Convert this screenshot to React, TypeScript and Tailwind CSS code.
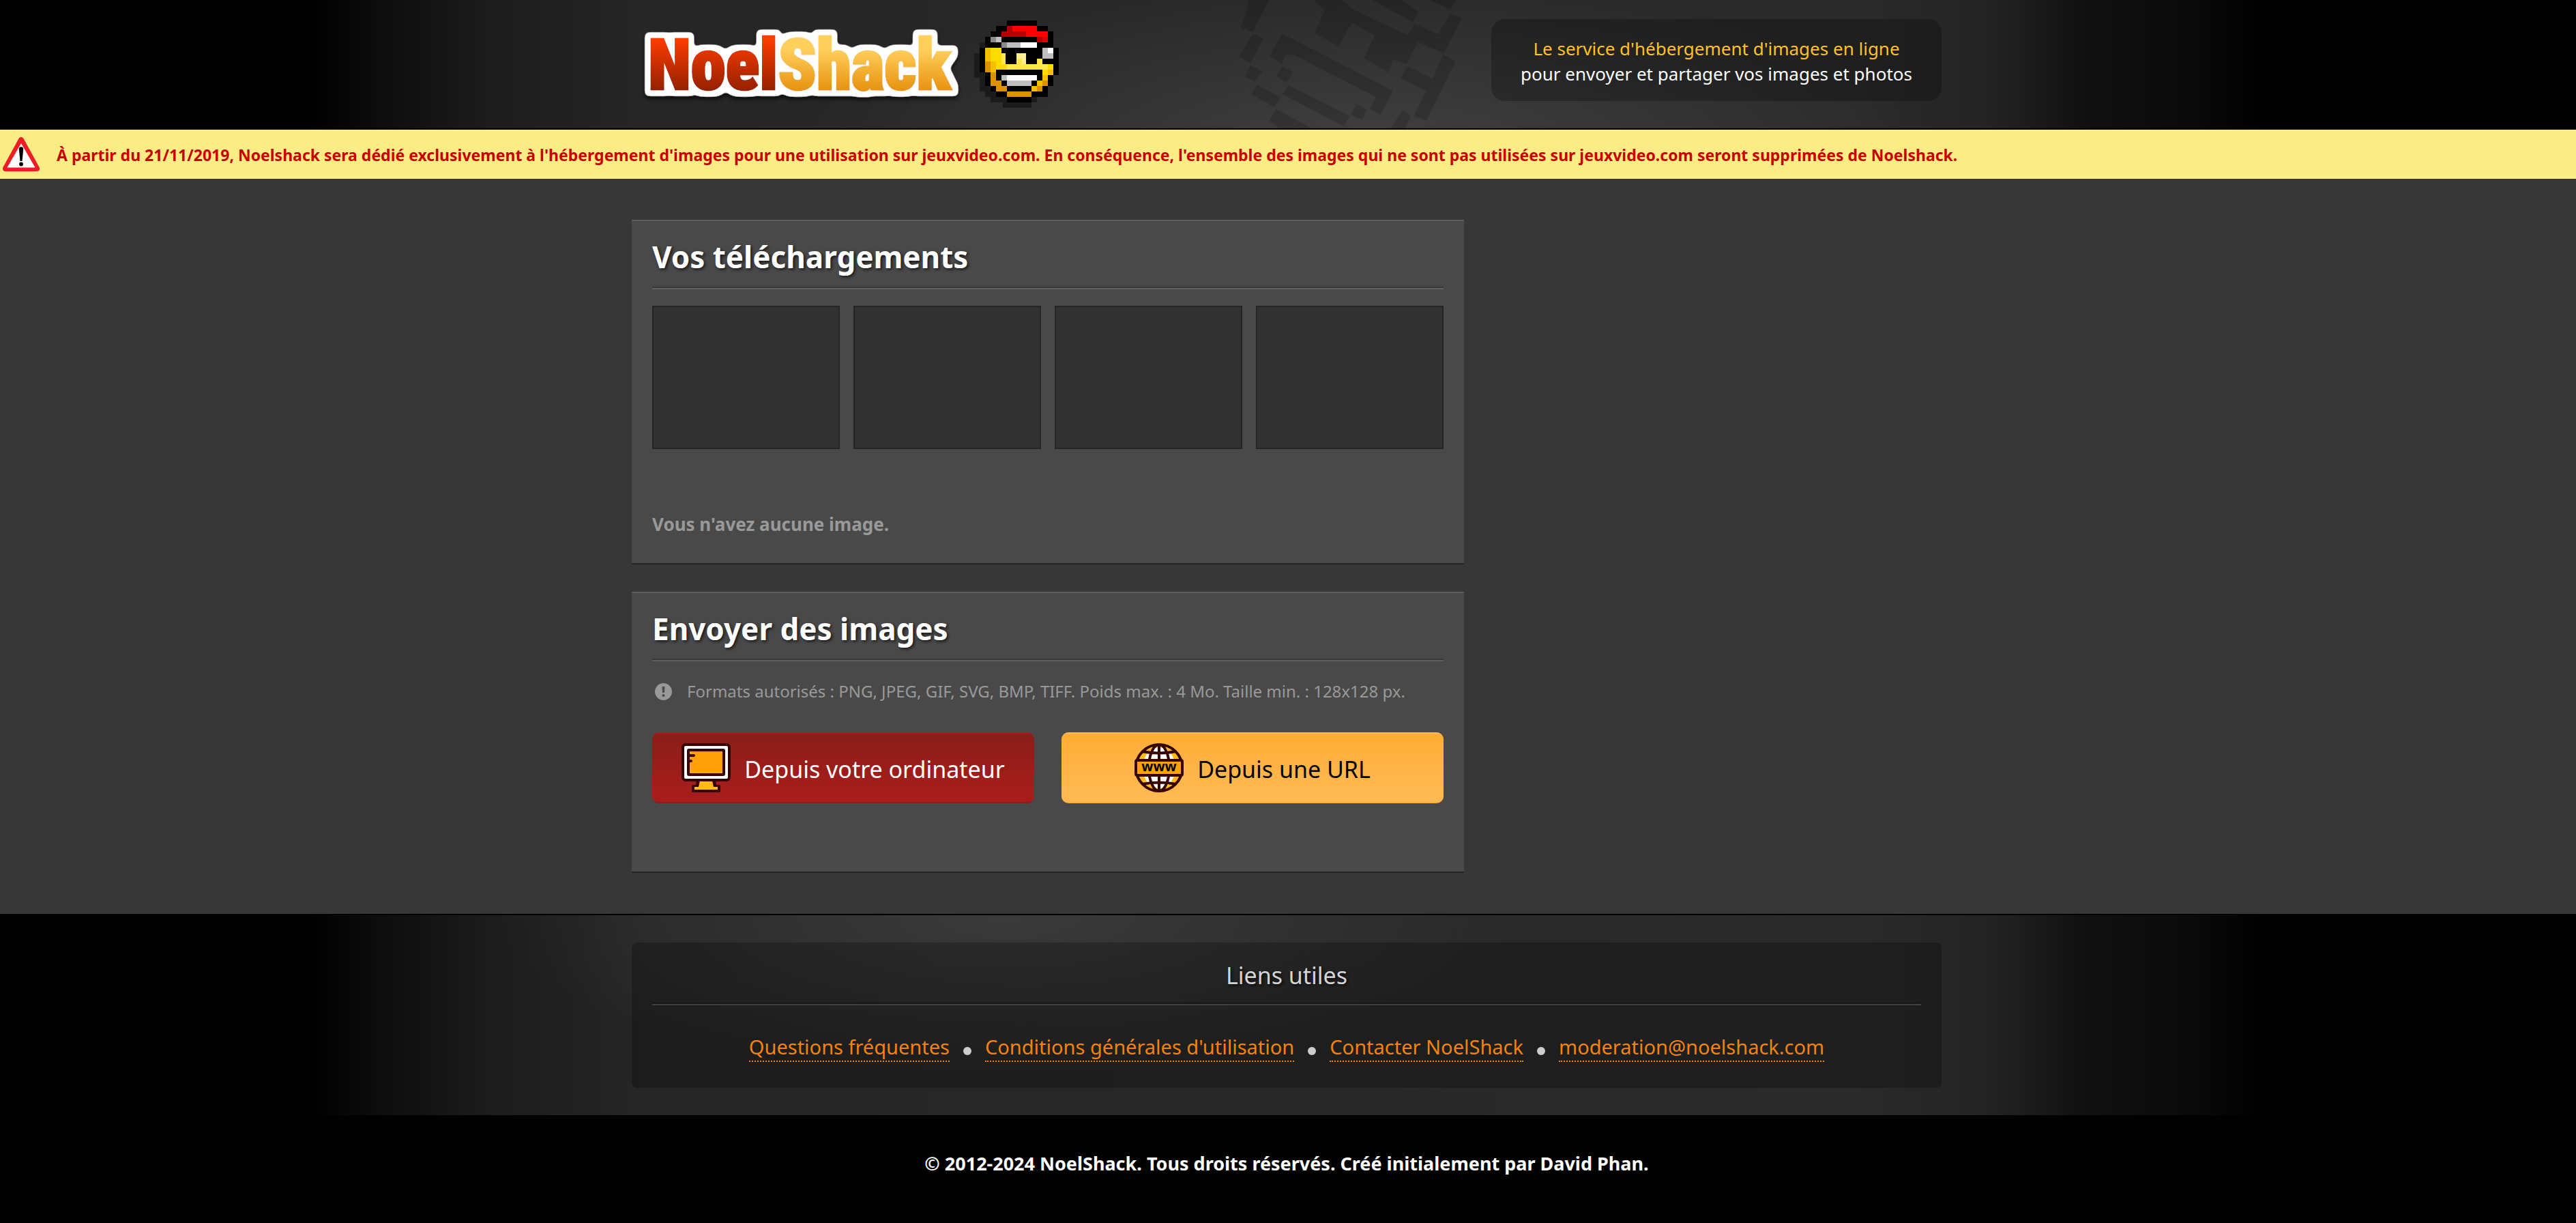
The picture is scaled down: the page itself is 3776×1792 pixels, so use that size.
import type { ReactNode } from "react";

type Cell = [x: number, y: number, right: number, bottom: number, fill: string];

const SMILEY: Cell[] = [
  [36, 108, 84, 312, "#1b1b1b"],
  [12, 156, 60, 264, "#1b1b1b"],
  [36, 300, 108, 324, "#1b1b1b"],
  [60, 312, 108, 348, "#1b1b1b"],
  [84, 336, 288, 372, "#1b1b1b"],
  [138, 360, 264, 396, "#1b1b1b"],
  [156, 12, 288, 36, "#000"],
  [108, 36, 336, 60, "#000"],
  [84, 60, 360, 84, "#000"],
  [60, 84, 360, 132, "#000"],
  [36, 132, 384, 240, "#000"],
  [60, 240, 384, 252, "#000"],
  [60, 252, 360, 300, "#000"],
  [84, 300, 336, 324, "#000"],
  [108, 324, 336, 348, "#000"],
  [156, 348, 264, 372, "#000"],
  [156, 36, 180, 60, "#b00000"],
  [180, 36, 288, 60, "#ff0000"],
  [132, 60, 240, 84, "#b00000"],
  [240, 60, 336, 84, "#ff0000"],
  [288, 84, 312, 108, "#b00000"],
  [312, 84, 336, 108, "#dc0000"],
  [84, 84, 108, 108, "#8a8a8a"],
  [108, 84, 132, 108, "#bfbfbf"],
  [132, 108, 156, 132, "#8a8a8a"],
  [156, 108, 216, 132, "#bfbfbf"],
  [216, 108, 288, 132, "#fff"],
  [312, 132, 360, 180, "#bfbfbf"],
  [336, 132, 360, 156, "#fff"],
  [60, 132, 84, 192, "#f5bf00"],
  [84, 132, 132, 228, "#fcdc00"],
  [60, 192, 84, 240, "#dd9000"],
  [84, 192, 108, 240, "#f5bf00"],
  [132, 156, 150, 204, "#fde650"],
  [108, 204, 156, 228, "#fcdc00"],
  [156, 204, 336, 228, "#fde650"],
  [336, 204, 360, 228, "#fcdc00"],
  [198, 156, 240, 204, "#feec90"],
  [198, 180, 222, 204, "#fde650"],
  [288, 180, 312, 204, "#fde650"],
  [84, 240, 108, 300, "#dd9000"],
  [108, 276, 132, 324, "#dd9000"],
  [132, 300, 156, 324, "#dd9000"],
  [156, 324, 264, 348, "#dd9000"],
  [312, 228, 336, 252, "#fcdc00"],
  [336, 228, 360, 252, "#f5bf00"],
  [312, 252, 336, 276, "#f5bf00"],
  [312, 276, 336, 300, "#dd9000"],
  [288, 276, 312, 300, "#f5bf00"],
  [264, 300, 288, 324, "#f5bf00"],
  [288, 300, 312, 324, "#dd9000"],
  [132, 252, 156, 276, "#bfbfbf"],
  [156, 252, 288, 276, "#fff"],
  [156, 276, 264, 300, "#bfbfbf"],
];

const WATERMARK = [
  "92,0 180,0 108,140 55,120 75,75",
  "108,148 155,170 98,278 48,250",
  "100,285 152,315 118,360 75,335",
  "128,372 232,428 205,470 102,415",
  "210,480 370,564 225,564 183,530",
  "238,148 725,398 672,505 625,480 650,425 285,240 255,242 235,282 183,248",
  "238,290 287,318 258,362 212,335",
  "265,375 535,510 510,555 240,415",
  "565,457 612,482 590,528 540,500",
  "765,485 805,510 780,564 715,564",
  "380,0 500,0 545,38 790,155 820,105 925,150 975,62 1028,78 950,235 835,185 785,282 725,262 705,318 598,255 645,155 545,100 487,205 380,145 425,45",
  "635,0 760,0 835,50 815,98",
  "885,0 1000,0 980,40",
  "945,240 1000,270 872,532 818,510 870,400 762,345 785,290 900,345",
];

const LINKS = [
  { label: "Questions fréquentes", href: "#faq" },
  { label: "Conditions générales d'utilisation", href: "#cgu" },
  { label: "Contacter NoelShack", href: "#contact" },
  { label: "moderation@noelshack.com", href: "mailto:moderation@noelshack.com" },
];

function Logo() {
  return (
    <svg className="block h-[188px] w-[640px]" viewBox="0 0 640 188" role="img" aria-label="NoelShack">
      <defs>
        <linearGradient id="red" gradientUnits="userSpaceOnUse" x1="0" y1="57" x2="0" y2="132">
          <stop offset="0" stopColor="#fa3c00" />
          <stop offset="1" stopColor="#962200" />
        </linearGradient>
        <linearGradient id="gold" gradientUnits="userSpaceOnUse" x1="0" y1="57" x2="0" y2="132">
          <stop offset="0.2" stopColor="#ffd05c" />
          <stop offset="1" stopColor="#e89210" />
        </linearGradient>
        <filter id="outline" filterUnits="userSpaceOnUse" x="0" y="20" width="520" height="168">
          <feMorphology in="SourceAlpha" operator="dilate" radius="7" />
          <feGaussianBlur stdDeviation="3" />
          <feComponentTransfer result="shape">
            <feFuncA type="linear" slope="6" intercept="-1.6" />
          </feComponentTransfer>
          <feFlood floodColor="#fff" />
          <feComposite in2="shape" operator="in" result="white" />
          <feGaussianBlur in="shape" stdDeviation="3" />
          <feOffset dy="4" result="soft" />
          <feFlood floodColor="#000" floodOpacity="0.7" />
          <feComposite in2="soft" operator="in" result="shadow" />
          <feMerge>
            <feMergeNode in="shadow" />
            <feMergeNode in="white" />
            <feMergeNode in="SourceGraphic" />
          </feMerge>
        </filter>
      </defs>
      <text
        x="24"
        y="131"
        strokeWidth="3"
        className="text-[103px] font-black [font-family:'Roboto_Condensed',Roboto,sans-serif]"
        filter="url(#outline)"
      >
        <tspan fill="url(#red)" stroke="url(#red)">Noel</tspan>
        <tspan fill="url(#gold)" stroke="url(#gold)">Shack</tspan>
      </text>
      <svg x="502" y="30" width="124" height="128" viewBox="12 12 372 384" shapeRendering="crispEdges">
        {SMILEY.map(([x, y, r, b, fill]) => (
          <rect key={`${x}-${y}-${r}-${b}`} x={x} y={y} width={r - x} height={b - y} fill={fill} />
        ))}
      </svg>
    </svg>
  );
}

function WarningIcon() {
  return (
    <svg className="h-[50px] w-[54px] shrink-0" viewBox="0 0 54 50" aria-hidden="true">
      <path d="M27 4 50 46H4Z" fill="#ee1c24" stroke="#ee1c24" strokeWidth="8" strokeLinejoin="round" />
      <path d="M27 9 47.500 44.500H6.500Z" fill="#fff" />
      <path d="M23.800 17.500a3.200 3.200 0 0 1 6.400 0L28.500 35h-3Z" fill="#000" />
      <circle cx="27" cy="39.500" r="2.900" fill="#000" />
    </svg>
  );
}

function InfoIcon() {
  return (
    <svg className="size-[25px] shrink-0" viewBox="0 0 25 25" aria-hidden="true">
      <circle cx="12.500" cy="12.500" r="12.500" fill="#999" />
      <path d="M10.500 5h4l-.6 9h-2.800Z" fill="#4a4a4a" />
      <circle cx="12.500" cy="18" r="2" fill="#4a4a4a" />
    </svg>
  );
}

function MonitorIcon() {
  return (
    <svg className="size-[72px] shrink-0" viewBox="0 0 72 72" aria-hidden="true">
      <path d="M22 54h28l1 7h4a2 2 0 0 1 2 2v7a2 2 0 0 1-2 2H17a2 2 0 0 1-2-2v-7a2 2 0 0 1 2-2h4Z" fill="#360000" />
      <path d="M27 55h18l2 9h6v4H19v-4h6Z" fill="#ffba1a" />
      <rect x="2" y="2" width="68" height="52" rx="4" fill="#fff" stroke="#360000" strokeWidth="4" />
      <rect x="10" y="10" width="52" height="36" rx="1" fill="#ffa20a" stroke="#360000" strokeWidth="4" />
      <path d="M12 18h6M12 26h2" stroke="#360000" strokeWidth="4" strokeLinecap="round" />
    </svg>
  );
}

function GlobeIcon() {
  return (
    <svg className="size-[72px] shrink-0" viewBox="0 0 72 72" aria-hidden="true">
      <circle cx="36" cy="36" r="34" fill="#ffba1a" />
      <ellipse cx="36" cy="36" rx="24" ry="30" fill="#fff" />
      <g fill="none" stroke="#360000" strokeWidth="4">
        <circle cx="36" cy="36" r="34" />
        <ellipse cx="36" cy="36" rx="15" ry="34" />
        <path d="M36 2v68M11 12q25 5 50 0M11 60q25-5 50 0" />
      </g>
      <rect x="2" y="25" width="68" height="22" rx="2" fill="#ffa20a" stroke="#360000" strokeWidth="4" />
      <text x="36" y="41" textAnchor="middle" className="text-[20px] font-bold">www</text>
    </svg>
  );
}

function Panel({ title, className, children }: { title: string; className: string; children: ReactNode }) {
  return (
    <section className={`border-t-2 border-b-2 border-t-[#5d5d5d] border-b-[#252525] bg-[#494949] px-[30px] pt-[22px] ${className}`}>
      <h2 className="border-b-2 border-[#383838] pb-3.5 text-[44px] leading-[60px] font-bold text-white [text-shadow:2px_2px_4px_rgba(0,0,0,0.7)]">
        {title}
      </h2>
      <div className="h-0.5 bg-[#606060]" />
      {children}
    </section>
  );
}

export default function App() {
  return (
    <div className="min-h-screen bg-black font-['Noto_Sans','Open_Sans',sans-serif]">
      <header className="border-b-2 border-black bg-[radial-gradient(ellipse_22%_130%_at_53%_115%,rgba(255,255,255,0.11),transparent),linear-gradient(90deg,#000_12%,#0e0e0e_15%,#1c1c1c_19%,#262626_25%,#2a2a2a_72%,#242424_77%,#101010_81%,#0a0a0a_85%,#000_88%)] pr-1">
        <div className="relative mx-auto flex max-w-[1920px] items-start justify-between">
          <svg className="absolute top-0 left-[874px] h-[188px] w-[360px]" viewBox="0 0 1080 564" aria-hidden="true">
            {WATERMARK.map((points) => (
              <polygon key={points} points={points} fill="#000" fillOpacity="0.15" />
            ))}
          </svg>
          <a href="#accueil">
            <Logo />
          </a>
          <p className="mt-7 h-[120px] w-[660px] rounded-[20px] bg-black/25 pt-[25px] text-center text-[26px] leading-[37px] text-white">
            <span className="block text-[#ffc125]">Le service d'hébergement d'images en ligne</span>
            pour envoyer et partager vos images et photos
          </p>
        </div>
      </header>

      <div role="alert" className="flex min-h-[72px] items-center gap-[25px] bg-[#fbec85] pl-1 text-[23px] font-bold text-[#c80000]">
        <WarningIcon />
        <p className="pt-0.5">
          À partir du 21/11/2019, Noelshack sera dédié exclusivement à l'hébergement d'images pour une utilisation sur
          jeuxvideo.com. En conséquence, l'ensemble des images qui ne sont pas utilisées sur jeuxvideo.com seront
          supprimées de Noelshack.
        </p>
      </div>

      <main className="bg-[#373737] py-[60px] pr-1">
        <div className="mx-auto max-w-[1920px]">
          <div className="flex max-w-[1220px] flex-col gap-10">
            <Panel title="Vos téléchargements" className="pb-[37px]">
              <ul className="mt-6 grid grid-cols-4 gap-5">
                {[1, 2, 3, 4].map((slot) => (
                  <li key={slot} className="h-[210px] border-2 border-[#252525] bg-[#323232]" />
                ))}
              </ul>
              <p className="mt-[90px] text-[26px] leading-10 font-bold text-[#999]">Vous n'avez aucune image.</p>
            </Panel>

            <Panel title="Envoyer des images" className="pb-[100px]">
              <p className="mt-[26px] flex items-center gap-[22px] pl-1 text-[24px] leading-9 text-[#999]">
                <InfoIcon />
                Formats autorisés : PNG, JPEG, GIF, SVG, BMP, TIFF. Poids max. : 4 Mo. Taille min. : 128x128 px.
              </p>
              <div className="mt-[42px] grid grid-cols-2 gap-10 text-[34px]">
                <button
                  type="button"
                  className="flex h-[104px] items-center justify-center gap-5 rounded-[10px] border-y-2 border-t-[#ab1c1c] border-b-[#8a1e18] bg-linear-to-b from-[#8a1e18] to-[#ab1c1c] text-white"
                >
                  <MonitorIcon />
                  <span className="pt-1">Depuis votre ordinateur</span>
                </button>
                <button
                  type="button"
                  className="flex h-[104px] items-center justify-center gap-5 rounded-[10px] border-y-2 border-t-[#ffba55] border-b-[#ffad33] bg-linear-to-b from-[#ffad33] to-[#ffba55] text-black"
                >
                  <GlobeIcon />
                  <span className="pt-1">Depuis une URL</span>
                </button>
              </div>
            </Panel>
          </div>
        </div>
      </main>

      <footer>
        <div className="border-t-2 border-black bg-[radial-gradient(ellipse_20%_80%_at_39%_0%,rgba(255,255,255,0.09),transparent),linear-gradient(90deg,#000_12%,#0e0e0e_15%,#1c1c1c_19%,#262626_25%,#2a2a2a_72%,#242424_77%,#101010_81%,#0a0a0a_85%,#000_88%)] py-10 pr-1">
          <nav aria-labelledby="liens" className="mx-auto max-w-[1920px] rounded-[8px] bg-black/25 px-[30px] pt-[26px] pb-[38px]">
            <h3
              id="liens"
              className="border-b-2 border-[#161616] pb-[18px] text-center text-[34px] leading-[44px] text-[#d4d4d4] [text-shadow:2px_2px_4px_rgba(0,0,0,0.8)]"
            >
              Liens utiles
            </h3>
            <div className="h-0.5 bg-[#404040]" />
            <ul className="mt-[41px] flex justify-center text-[29px] leading-10">
              {LINKS.map(({ label, href }, i) => (
                <li key={label} className="flex items-end">
                  {i > 0 && <span className="mx-5 mb-2.5 size-3 rounded-full bg-[#ccc]" />}
                  <a href={href} className="border-b-2 border-dotted border-[#f5820f] text-[#f5820f]">
                    {label}
                  </a>
                </li>
              ))}
            </ul>
          </nav>
        </div>
        <p className="mt-[51px] pr-1 text-center text-[27px] leading-10 font-bold text-white">
          © 2012-2024 NoelShack. Tous droits réservés. Créé initialement par David Phan.
        </p>
      </footer>
    </div>
  );
}
